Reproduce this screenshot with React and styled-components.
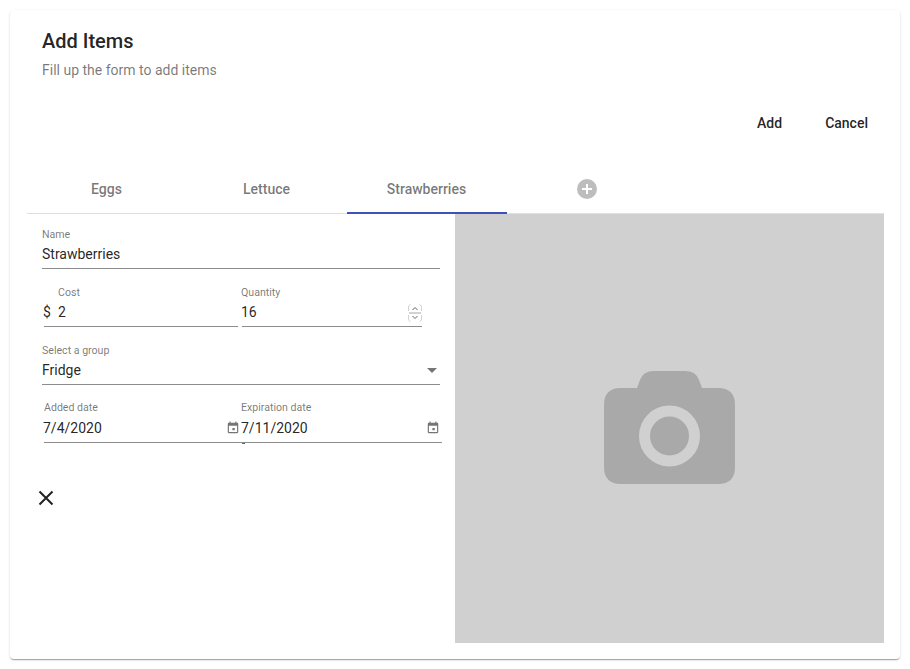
import React from 'react'
import styled, { createGlobalStyle } from 'styled-components'

const GlobalStyle = createGlobalStyle`
  html, body {
    margin: 0;
    padding: 0;
    background: #fff;
    font-family: Roboto, "Liberation Sans", sans-serif;
  }
  * { box-sizing: border-box; }
`

const Page = styled.div`
  padding: 10px;
  height: 669px;
`

const Card = styled.div`
  width: 890px;
  height: 649px;
  background: #fff;
  border-radius: 4px;
  box-shadow: 0 2px 1px -1px rgba(0,0,0,.2), 0 1px 1px 0 rgba(0,0,0,.14), 0 1px 3px 0 rgba(0,0,0,.12);
  padding: 16px 16px 16px 17px;
  display: flex;
  flex-direction: column;
`

const Header = styled.div`
  padding: 0 15px;
`

const Title = styled.h1`
  margin: 0;
  font-size: 20px;
  font-weight: 500;
  line-height: 30px;
  color: rgba(0,0,0,.87);
`

const Subtitle = styled.p`
  margin: 4px 0 0;
  font-size: 14px;
  line-height: 20px;
  color: rgba(0,0,0,.54);
`

const Actions = styled.div`
  display: flex;
  justify-content: flex-end;
  gap: 11px;
  margin-top: 25px;
`

const ActionButton = styled.button`
  border: 0;
  background: none;
  font: 500 14px/20px Roboto, sans-serif;
  color: rgba(0,0,0,.87);
  padding: 8px 16px;
  height: 36px;
`

const TabBar = styled.div`
  display: flex;
  margin-top: 25px;
  height: 48px;
  border-bottom: 1px solid #e0e0e0;
`

const Tab = styled.div`
  position: relative;
  width: 160px;
  display: flex;
  align-items: center;
  justify-content: center;
  padding: 0 1px 1px 0;
  font-size: 14px;
  font-weight: 500;
  color: rgba(0,0,0,.54);

  ${({ $active }) => $active && `
    &::after {
      content: "";
      position: absolute;
      left: 0;
      right: 0;
      bottom: -1px;
      height: 2px;
      background: #3f51b5;
    }
  `}
`

const Body = styled.div`
  flex: 1;
  display: flex;
  min-height: 0;
`

const FormSide = styled.div`
  width: 428px;
  padding: 14px 0 0 15px;
  display: flex;
  flex-direction: column;
`

const Row = styled.div`
  display: flex;
  margin-top: ${({ $top }) => $top ?? 17}px;
  margin-left: ${({ $left }) => $left ?? 0}px;
  width: ${({ $width }) => $width ?? 398}px;
`

const Field = styled.div`
  position: relative;
  flex: ${({ $width }) => ($width ? `0 0 ${$width}px` : '1')};
  margin-left: ${({ $gap }) => $gap ?? 0}px;
  height: ${({ $height }) => $height ?? 41}px;
  border-bottom: 1px solid #8c8c8c;

  ${({ $tick }) => $tick && `
    &::before {
      content: "";
      position: absolute;
      left: 0;
      bottom: -2px;
      width: 3px;
      height: 1px;
      background: #666;
    }
  `}
`

const Label = styled.label`
  display: block;
  margin-left: ${({ $indent }) => $indent ?? 0}px;
  font-size: 10.6px;
  line-height: 14px;
  color: rgba(0,0,0,.54);
`

const Value = styled.div`
  display: flex;
  align-items: center;
  margin-left: ${({ $indent }) => $indent ?? 0}px;
  margin-top: ${({ $top }) => $top ?? 2}px;
  font-size: 14px;
  line-height: 20px;
  color: rgba(0,0,0,.87);
`

const Prefix = styled.span`
  position: absolute;
  left: -1px;
  bottom: 4px;
  font-size: 14px;
  line-height: 20px;
  color: rgba(0,0,0,.87);
`

const Trailing = styled.span`
  position: absolute;
  right: ${({ $right }) => $right ?? 0}px;
  bottom: ${({ $bottom }) => $bottom ?? 7}px;
  display: flex;
  color: rgba(0,0,0,.54);
`

const CloseButton = styled.button`
  align-self: flex-start;
  margin: 47px 0 0 -4px;
  padding: 0;
  border: 0;
  background: none;
  display: flex;
  color: rgba(0,0,0,.87);
`

const PhotoSide = styled.div`
  width: 429px;
  height: 429px;
  background: #d0d0d0;
  display: flex;
  align-items: center;
  justify-content: center;
  padding-bottom: 2px;
`

const CalendarIcon = () => (
  <svg width="14" height="14" viewBox="0 0 24 24" fill="currentColor">
    <path d="M15 12h-4v4h4v-4zM16 1v2H8V1H6v2H5c-1.11 0-1.99.9-1.99 2L3 19c0 1.1.89 2 2 2h14c1.1 0 2-.9 2-2V5c0-1.1-.9-2-2-2h-1V1h-2zm3 18H5V8h14v11z" />
  </svg>
)

const SpinnerIcon = () => (
  <svg width="14" height="18" viewBox="0 0 14 18" fill="none">
    <path d="M.5 7V3Q.5 1 2.5.5M13.5 7V3Q13.5 1 11.5.5M1 8.5H13" stroke="#d2d2d2" />
    <path d="M.5 11V15Q.5 17 2.5 17.5M13.5 11V15Q13.5 17 11.5 17.5M1 9.5H13" stroke="#d2d2d2" />
    <path d="M4.5 6 7 3.5 9.5 6M4.5 12 7 14.5 9.5 12" stroke="#666" />
  </svg>
)

const PlusCircle = () => (
  <svg width="20" height="20" viewBox="0 0 20 20">
    <circle cx="10" cy="10" r="10" fill="#bdbdbd" />
    <path d="M10 5v10M5 10h10" stroke="#fff" strokeWidth="2" />
  </svg>
)

const CaretIcon = () => (
  <svg width="10" height="5" viewBox="0 0 10 5" fill="currentColor">
    <path d="M0 0h10L5 5z" />
  </svg>
)

const CloseIcon = () => (
  <svg width="16" height="16" viewBox="0 0 16 16" stroke="currentColor" strokeWidth="2" fill="none">
    <path d="M1.5 1.5 14.5 14.5M14.5 1.5 1.5 14.5" />
  </svg>
)

const CameraIcon = () => (
  <svg width="131" height="113" viewBox="0 0 131 113">
    <path
      fill="#a9a9a9"
      d="M33 17 36 9Q39 0 50 0H81Q92 0 95 9L98 17H114Q131 17 131 34V96Q131 113 114 113H17Q0 113 0 96V34Q0 17 17 17Z"
    />
    <circle cx="65.5" cy="65" r="25" fill="none" stroke="#d0d0d0" strokeWidth="11" />
  </svg>
)

const App = () => (
  <Page>
    <GlobalStyle />
    <Card>
      <Header>
        <Title>Add Items</Title>
        <Subtitle>Fill up the form to add items</Subtitle>
      </Header>
      <Actions>
        <ActionButton>Add</ActionButton>
        <ActionButton>Cancel</ActionButton>
      </Actions>
      <TabBar>
        <Tab>Eggs</Tab>
        <Tab>Lettuce</Tab>
        <Tab $active>Strawberries</Tab>
        <Tab><PlusCircle /></Tab>
      </TabBar>
      <Body>
        <FormSide>
          <Row $top={0}>
            <Field>
              <Label>Name</Label>
              <Value>Strawberries</Value>
            </Field>
          </Row>
          <Row $width={380} $left={2}>
            <Field $width={194}>
              <Label $indent={14}>Cost</Label>
              <Value $indent={14}>2</Value>
              <Prefix>$</Prefix>
            </Field>
            <Field $width={180} $gap={4}>
              <Label $indent={-1}>Quantity</Label>
              <Value $indent={-1}>16</Value>
              <Trailing $bottom={4}><SpinnerIcon /></Trailing>
            </Field>
          </Row>
          <Row>
            <Field>
              <Label>Select a group</Label>
              <Value>Fridge</Value>
              <Trailing $right={3} $bottom={11}><CaretIcon /></Trailing>
            </Field>
          </Row>
          <Row $width={398} $left={2} $top={16}>
            <Field $width={198} $height={42}>
              <Label>Added date</Label>
              <Value $indent={-1} $top={3}>7/4/2020</Value>
              <Trailing $right={2}><CalendarIcon /></Trailing>
            </Field>
            <Field $width={200} $height={42} $tick>
              <Label $indent={-1}>Expiration date</Label>
              <Value $indent={-1} $top={3}>7/11/2020</Value>
              <Trailing $right={2}><CalendarIcon /></Trailing>
            </Field>
          </Row>
          <CloseButton><CloseIcon /></CloseButton>
        </FormSide>
        <PhotoSide><CameraIcon /></PhotoSide>
      </Body>
    </Card>
  </Page>
)

export default App
